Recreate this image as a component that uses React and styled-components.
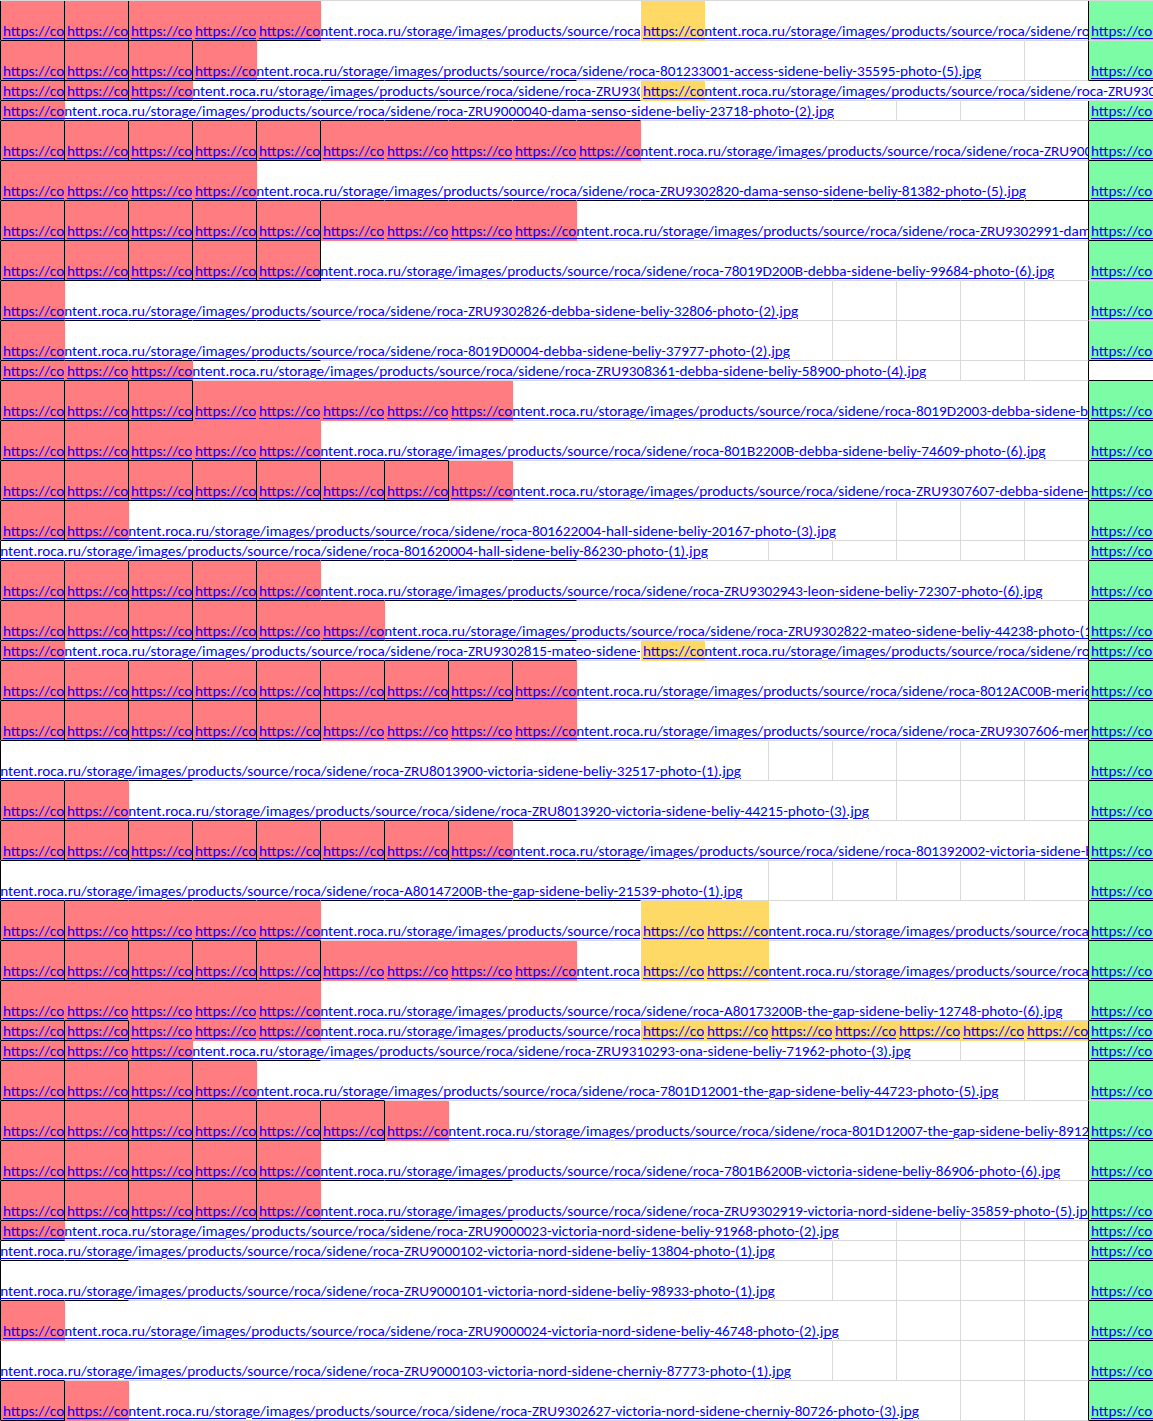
import styled, { createGlobalStyle } from "styled-components";

const P = "https://content.roca.ru/storage/images/products/source/roca/sidene/";
const RED = "#ff7c80";
const YEL = "#ffd966";
const GRN = "#7dfca6";
const GRID = "#d9d9d9";
const INK = "#000";

// s = column where the row's long link starts (-1 = scrolled-off column)
// n = red cells from col 0, b = boxed cells, L = black bottom rule length
// end = last column the link text reaches (when it is not cut off)
const rows = [
  { h: 40, n: 5, b: 2, L: 5, s: 4, url: "roca-801233001-access-sidene-beliy-35595-photo-(4).jpg", yel: [10], yurl: "roca-801233001-access-sidene-beliy-35595-photo-(3).jpg", gb: GRID },
  { h: 40, n: 4, b: 3, L: 9, s: 3, end: 15, url: "roca-801233001-access-sidene-beliy-35595-photo-(5).jpg" },
  { h: 20, n: 3, b: 2, L: 10, s: 2, url: "roca-ZRU9302820-dama-senso-sidene-beliy-81382-photo-(4).jpg", yel: [10], yurl: "roca-ZRU9302820-dama-senso-sidene-beliy-81382-photo-(3).jpg", g17: "empty" },
  { h: 20, n: 1, b: 0, L: 10, s: 0, end: 13, url: "roca-ZRU9000040-dama-senso-sidene-beliy-23718-photo-(2).jpg" },
  { h: 40, n: 10, b: 5, L: 5, s: 9, url: "roca-ZRU9000040-dama-senso-sidene-beliy-23718-photo-(1).jpg" },
  { h: 40, n: 4, b: 0, L: 17, s: 3, end: 16, url: "roca-ZRU9302820-dama-senso-sidene-beliy-81382-photo-(5).jpg" },
  { h: 40, n: 9, b: 5, L: 5, s: 8, url: "roca-ZRU9302991-dama-senso-sidene-beliy-40213-photo-(2).jpg" },
  { h: 40, n: 5, b: 5, L: 5, s: 4, end: 16, url: "roca-78019D200B-debba-sidene-beliy-99684-photo-(6).jpg", gb: GRID },
  { h: 40, n: 1, b: 0, L: 5, s: 0, end: 12, url: "roca-ZRU9302826-debba-sidene-beliy-32806-photo-(2).jpg", gb: GRID },
  { h: 40, n: 1, b: 0, L: 5, s: 0, end: 12, url: "roca-8019D0004-debba-sidene-beliy-37977-photo-(2).jpg" },
  { h: 20, n: 3, b: 0, L: 3, s: 2, end: 14, url: "roca-ZRU9308361-debba-sidene-beliy-58900-photo-(4).jpg", g17: "box" },
  { h: 40, n: 8, b: 3, L: 3, s: 7, url: "roca-8019D2003-debba-sidene-beliy-52716-photo-(3).jpg" },
  { h: 40, n: 5, b: 2, L: 0, s: 4, end: 16, url: "roca-801B2200B-debba-sidene-beliy-74609-photo-(6).jpg" },
  { h: 40, n: 8, b: 7, L: 7, s: 7, url: "roca-ZRU9307607-debba-sidene-beliy-61845-photo-(2).jpg" },
  { h: 40, n: 2, b: 1, L: 8, s: 1, end: 13, url: "roca-801622004-hall-sidene-beliy-20167-photo-(3).jpg" },
  { h: 20, n: 0, b: 0, L: 9, s: -1, end: 11, url: "roca-801620004-hall-sidene-beliy-86230-photo-(1).jpg" },
  { h: 40, n: 5, b: 4, L: 9, s: 4, end: 16, url: "roca-ZRU9302943-leon-sidene-beliy-72307-photo-(6).jpg" },
  { h: 40, n: 6, b: 4, L: 9, s: 5, url: "roca-ZRU9302822-mateo-sidene-beliy-44238-photo-(1).jpg" },
  { h: 20, n: 1, b: 0, L: 9, s: 0, url: "roca-ZRU9302815-mateo-sidene-beliy-30418-photo-(2).jpg", yel: [10], yurl: "roca-ZRU9302815-mateo-sidene-beliy-30418-photo-(1).jpg" },
  { h: 40, n: 9, b: 8, L: 8, s: 8, url: "roca-8012AC00B-merida-sidene-beliy-51203-photo-(2).jpg" },
  { h: 40, n: 9, b: 5, L: 5, s: 8, url: "roca-ZRU9307606-merida-sidene-beliy-27730-photo-(3).jpg" },
  { h: 40, n: 0, b: 0, L: 3, s: -1, end: 11, url: "roca-ZRU8013900-victoria-sidene-beliy-32517-photo-(1).jpg" },
  { h: 40, n: 2, b: 1, L: 9, s: 1, end: 13, url: "roca-ZRU8013920-victoria-sidene-beliy-44215-photo-(3).jpg" },
  { h: 40, n: 8, b: 7, L: 10, s: 7, url: "roca-801392002-victoria-sidene-beliy-60954-photo-(2).jpg" },
  { h: 40, n: 0, b: 0, L: 10, s: -1, end: 11, url: "roca-A80147200B-the-gap-sidene-beliy-21539-photo-(1).jpg" },
  { h: 40, n: 5, b: 1, L: 5, s: 4, url: "roca-A80147200B-the-gap-sidene-beliy-21539-photo-(2).jpg", yel: [10, 11], yurl: "roca-A80147200B-the-gap-sidene-beliy-21539-photo-(3).jpg" },
  { h: 40, n: 9, b: 5, L: 5, s: 8, url: "roca-A80173200B-the-gap-sidene-beliy-12748-photo-(4).jpg", yel: [10, 11], yurl: "roca-A80173200B-the-gap-sidene-beliy-12748-photo-(5).jpg" },
  { h: 40, n: 5, b: 0, L: 2, s: 4, end: 16, url: "roca-A80173200B-the-gap-sidene-beliy-12748-photo-(6).jpg" },
  { h: 20, n: 5, b: 2, L: 2, s: 4, url: "roca-A80173200B-the-gap-sidene-beliy-12748-photo-(1).jpg", yel: [10, 11, 12, 13, 14, 15, 16] },
  { h: 20, n: 3, b: 1, L: 5, s: 2, end: 14, url: "roca-ZRU9310293-ona-sidene-beliy-71962-photo-(3).jpg" },
  { h: 40, n: 4, b: 3, L: 6, s: 3, end: 15, url: "roca-7801D12001-the-gap-sidene-beliy-44723-photo-(5).jpg", gb: GRID },
  { h: 40, n: 7, b: 6, L: 6, s: 6, url: "roca-801D12007-the-gap-sidene-beliy-89124-photo-(2).jpg" },
  { h: 40, n: 5, b: 4, L: 8, s: 4, end: 16, url: "roca-7801B6200B-victoria-sidene-beliy-86906-photo-(6).jpg" },
  { h: 40, n: 5, b: 4, L: 8, s: 4, url: "roca-ZRU9302919-victoria-nord-sidene-beliy-35859-photo-(5).jpg" },
  { h: 20, n: 1, b: 0, L: 1, s: 0, end: 13, url: "roca-ZRU9000023-victoria-nord-sidene-beliy-91968-photo-(2).jpg" },
  { h: 20, n: 0, b: 0, L: 2, s: -1, end: 12, url: "roca-ZRU9000102-victoria-nord-sidene-beliy-13804-photo-(1).jpg" },
  { h: 40, n: 0, b: 0, L: 2, s: -1, end: 12, url: "roca-ZRU9000101-victoria-nord-sidene-beliy-98933-photo-(1).jpg" },
  { h: 40, n: 1, b: 0, L: 0, s: 0, end: 13, url: "roca-ZRU9000024-victoria-nord-sidene-beliy-46748-photo-(2).jpg" },
  { h: 40, n: 0, b: 0, L: 1, s: -1, end: 12, url: "roca-ZRU9000103-victoria-nord-sidene-cherniy-87773-photo-(1).jpg" },
  { h: 40, n: 2, b: 1, L: 1, s: 1, end: 14, url: "roca-ZRU9302627-victoria-nord-sidene-cherniy-80726-photo-(3).jpg" },
];

const GlobalStyle = createGlobalStyle`
  html, body {
    margin: 0;
    padding: 0;
    background: #fff;
  }
`;

const Sheet = styled.div`
  width: 1153px;
  height: 1421px;
  overflow: hidden;
  border-top: 1px solid ${GRID};
  box-sizing: border-box;
`;

const Body = styled.div`
  margin-left: -63px;
`;

const Row = styled.div`
  display: grid;
  grid-template-columns: repeat(18, 64px) 140px;
  height: ${(p) => p.$h}px;
`;

const Cell = styled.div`
  grid-row: 1;
  grid-column: ${(p) => p.$col};
  box-sizing: border-box;
  background: ${(p) => p.$fill || "#fff"};
  border-right: 1px solid ${(p) => p.$right};
  border-bottom: 1px solid ${(p) => p.$bottom};
`;

const Link = styled.a`
  grid-row: 1;
  grid-column: ${(p) => p.$from} / ${(p) => p.$to};
  align-self: end;
  min-width: 0;
  margin: 0 1px 1px 0;
  padding: 0 0 1px 2px;
  overflow: hidden;
  white-space: nowrap;
  color: #0000ff;
  text-decoration: underline;
  text-underline-offset: 2px;
  font-family: Carlito, "Liberation Sans", sans-serif;
  font-size: 15.2px;
  line-height: 16px;
`;

function SheetRow({ row, next }) {
  const fill = {};
  for (let c = 0; c < row.n; c++) fill[c] = RED;
  (row.yel || []).forEach((c) => (fill[c] = YEL));
  const g17 = row.g17 || "green";
  if (g17 === "green") fill[17] = GRN;

  const links = [];
  if (row.s === -1) links.push({ c: -1, url: P + row.url, end: row.end });
  for (let c = 0; c < row.n; c++) {
    links.push({ c, url: P + row.url, end: c === row.s ? row.end : undefined });
  }
  (row.yel || []).forEach((c) => links.push({ c, url: P + (row.yurl || row.url) }));
  if (g17 === "green") links.push({ c: 17, url: P + row.url });

  const taken = links.map((l) => l.c);
  if (g17 === "box") taken.push(17);
  const hidden = new Set();
  links.forEach((l) => {
    const later = taken.filter((t) => t > l.c);
    l.next = later.length ? Math.min(...later) : 18;
    const cover = l.end ?? l.next - 1;
    for (let c = l.c; c < cover; c++) hidden.add(c);
  });

  const nb = next ? next.b : 0;
  const cells = [];
  for (let c = -1; c <= 17; c++) {
    let right = GRID;
    if (c < row.b || (c === 16 && g17 !== "empty")) right = INK;
    else if (hidden.has(c) || fill[c] || fill[c + 1]) right = fill[c] || "#fff";

    let bottom = GRID;
    if (c === 17) bottom = g17 === "empty" ? GRID : row.gb || INK;
    else if (c >= 0 && (c < row.L || c < row.b || c < nb)) bottom = INK;
    else if (fill[c]) bottom = fill[c];

    cells.push(
      <Cell key={c} $col={c + 2} $fill={fill[c]} $right={right} $bottom={bottom} />
    );
  }

  return (
    <Row $h={row.h}>
      {cells}
      {links.map((l) => (
        <Link key={"l" + l.c} href={l.url} $from={l.c + 2} $to={l.next + 2}>
          {l.url}
        </Link>
      ))}
    </Row>
  );
}

export default function App() {
  return (
    <>
      <GlobalStyle />
      <Sheet>
        <Body>
          {rows.map((row, i) => (
            <SheetRow key={i} row={row} next={rows[i + 1]} />
          ))}
        </Body>
      </Sheet>
    </>
  );
}
